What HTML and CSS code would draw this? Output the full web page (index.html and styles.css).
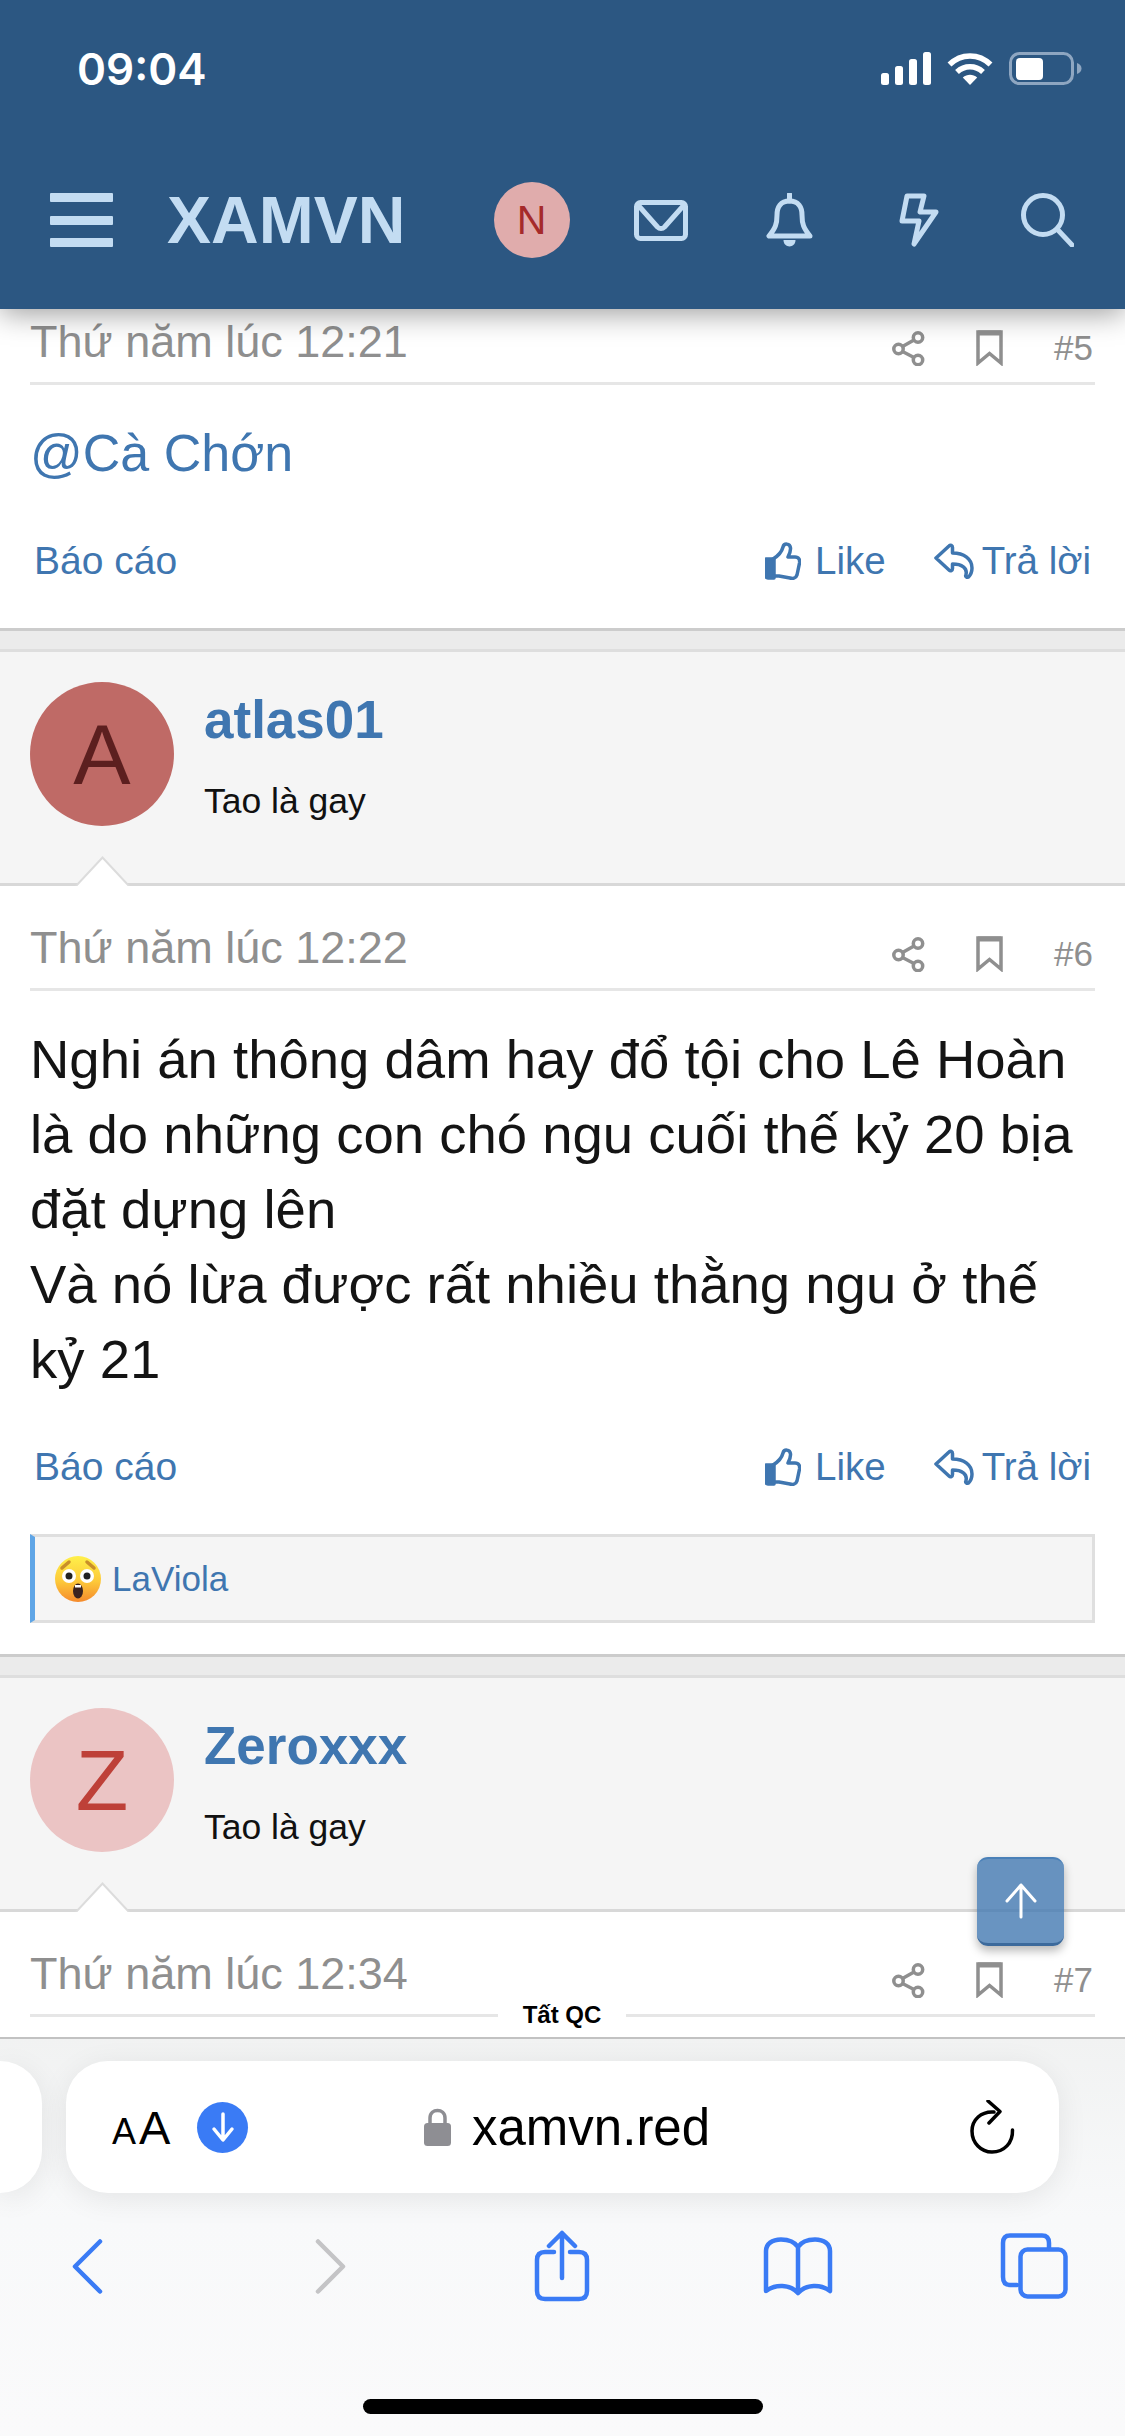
FILE: index.html
```html
<!DOCTYPE html>
<html lang="en">

<head>
    <meta charset="UTF-8" />
    <meta name="viewport" content="width=device-width, initial-scale=1.0" />
    <title>XAMVN</title>
    <link rel="stylesheet" href="styles.css">
</head>

<body>
    <svg class="defs" width="0" height="0">
        <symbol id="i-share" viewBox="0 0 33 35">
            <circle cx="26" cy="6.5" r="4.7" />
            <circle cx="6.5" cy="18" r="4.7" />
            <circle cx="26" cy="29" r="4.7" />
            <path d="M10.5 15.5 22 9M10.5 20.5 22 26.5" />
        </symbol>
        <symbol id="i-mark" viewBox="0 0 27 36">
            <path d="M2 2H25V33L13.5 23.5 2 33Z" />
            <path d="M2 3H25" stroke-width="5" />
        </symbol>
        <symbol id="i-thumb" viewBox="0 0 36 38">
            <path d="M1 17H9V36H3Q1 36 1 34Z" fill="#3f76b0" />
            <path d="M8 17C13 14 17 9 18 5 19 1 25 1 25.500 6 25.800 9 24.500 12 23 15H30C34 15 35 18 34.500 21L32 33C31 36 28 37 25 36L14 34H8" />
        </symbol>
        <symbol id="i-reply" viewBox="0 0 40 36">
            <path d="M2 15 15 3C16.500 1.500 18.500 2.500 18.500 4.500V10C30 10 38 16 38 25 38 29 36.500 32 34.500 34 32.500 35 31 33.500 32 31.500 33.500 25 28 21 18.500 21V25.500C18.500 27.500 16.500 28.500 15 27Z" />
        </symbol>
    </svg>

    <div class="screen">
        <header class="top">
            <div class="status">
                <span class="clock">09:04</span>
                <div class="status-icons">
                    <svg width="50" height="33" viewBox="0 0 50 33" fill="#fff">
                        <rect x="0" y="21" width="8" height="12" rx="2.500" />
                        <rect x="14" y="14" width="8" height="19" rx="2.500" />
                        <rect x="28" y="7" width="8" height="26" rx="2.500" />
                        <rect x="42" y="0" width="8" height="33" rx="2.500" />
                    </svg>
                    <svg width="46" height="33" viewBox="0 0 46 33" fill="none" stroke="#fff" stroke-width="5.500">
                        <path d="M2.500 12.500C14 1 32 1 43.500 12.500" />
                        <path d="M10 20C17.500 13 28.500 13 36 20" />
                        <path d="M23 33 15.800 25.500C20 21.800 26 21.800 30.200 25.500Z" fill="#fff" stroke="none" />
                    </svg>
                    <svg width="73" height="33" viewBox="0 0 73 33">
                        <rect x="1.500" y="1.500" width="62" height="30" rx="9" fill="none" stroke="#8ea6c1" stroke-width="3" />
                        <rect x="7" y="6" width="27" height="22" rx="4" fill="#fff" />
                        <path d="M68 11C71 12 72.500 14 72.500 16.500S71 21 68 22Z" fill="#8ea6c1" />
                    </svg>
                </div>
            </div>
            <nav class="nav">
                <div class="burger"><i></i><i></i><i></i></div>
                <span class="logo">XAMVN</span>
                <div class="nav-items">
                    <div class="nav-slot"><span class="me">N</span></div>
                    <div class="nav-slot">
                        <svg class="nav-icon" width="54" height="41" viewBox="0 0 54 41">
                            <rect x="2.500" y="2.500" width="49" height="36" rx="4" />
                            <path d="M4 5 23.500 27C25.500 29 28.500 29 30.500 27L50 5" />
                        </svg>
                    </div>
                    <div class="nav-slot">
                        <svg class="nav-icon" width="47" height="54" viewBox="0 0 47 54">
                            <path d="M23.500 8C14.500 8 11 14 11 22 11 31 9.500 35 3 43H44C37.500 35 36 31 36 22 36 14 32.500 8 23.500 8Z" />
                            <path d="M23.500 1V8" />
                            <path class="fill" d="M17.500 47H29.500C29.500 55.500 17.500 55.500 17.500 47Z" />
                        </svg>
                    </div>
                    <div class="nav-slot">
                        <svg class="nav-icon" width="40" height="54" viewBox="0 0 40 54">
                            <path d="M8 3H25L21 19H37L15 51 20 28H3Z" />
                        </svg>
                    </div>
                    <div class="nav-slot">
                        <svg class="nav-icon" width="53" height="54" viewBox="0 0 53 54">
                            <circle cx="22" cy="22" r="19.500" />
                            <path d="M36 36 51 52" />
                        </svg>
                    </div>
                </div>
            </nav>
        </header>

        <main class="thread">
            <!-- post 5, scrolled under the header -->
            <article class="post">
                <div class="post-head first">
                    <span class="post-date">Thứ năm lúc 12:21</span>
                    <div class="post-tools">
                        <svg class="tool" width="33" height="35"><use href="#i-share" /></svg>
                        <svg class="tool" width="27" height="36"><use href="#i-mark" /></svg>
                        <span class="post-num">#5</span>
                    </div>
                </div>
                <div class="post-text mention">@Cà Chớn</div>
                <div class="post-foot">
                    <a class="foot-link">Báo cáo</a>
                    <div class="foot-right">
                        <a class="foot-link like"><svg class="foot-icon" width="36" height="38"><use href="#i-thumb" /></svg>Like</a>
                        <a class="foot-link reply"><svg class="foot-icon" width="40" height="36"><use href="#i-reply" /></svg>Trả lời</a>
                    </div>
                </div>
            </article>
            <div class="gap"></div>

            <section class="user">
                <div class="avatar av-a">A</div>
                <div class="user-info">
                    <a class="user-name">atlas01</a>
                    <span class="user-title">Tao là gay</span>
                </div>
                <svg class="pointer" width="55" height="30" viewBox="0 0 55 30">
                    <path d="M1 30 27.500 1.500 54 30" fill="#fff" stroke="#dcdcdc" stroke-width="2" />
                </svg>
            </section>
            <article class="post">
                <div class="post-head">
                    <span class="post-date">Thứ năm lúc 12:22</span>
                    <div class="post-tools">
                        <svg class="tool" width="33" height="35"><use href="#i-share" /></svg>
                        <svg class="tool" width="27" height="36"><use href="#i-mark" /></svg>
                        <span class="post-num">#6</span>
                    </div>
                </div>
                <div class="post-text">Nghi án thông dâm hay đổ tội cho Lê Hoàn là do những con chó ngu cuối thế kỷ 20 bịa đặt dựng lên<br>Và nó lừa được rất nhiều thằng ngu ở thế kỷ 21</div>
                <div class="post-foot">
                    <a class="foot-link">Báo cáo</a>
                    <div class="foot-right">
                        <a class="foot-link like"><svg class="foot-icon" width="36" height="38"><use href="#i-thumb" /></svg>Like</a>
                        <a class="foot-link reply"><svg class="foot-icon" width="40" height="36"><use href="#i-reply" /></svg>Trả lời</a>
                    </div>
                </div>
                <div class="likes">
                    <svg width="46" height="46" viewBox="0 0 46 46">
                        <defs>
                            <linearGradient id="wow" x1="0" y1="0" x2="0" y2="1">
                                <stop offset="0" stop-color="#fff04a" />
                                <stop offset="0.55" stop-color="#fdc93a" />
                                <stop offset="1" stop-color="#f58a2c" />
                            </linearGradient>
                        </defs>
                        <circle cx="23" cy="23" r="23" fill="url(#wow)" />
                        <path d="M7 12 14 6M39 12 32 6" stroke="#c98f2a" stroke-width="3.500" stroke-linecap="round" />
                        <circle cx="14" cy="20" r="7" fill="#fff" />
                        <circle cx="32" cy="20" r="7" fill="#fff" />
                        <circle cx="14" cy="20" r="3.500" fill="#222" />
                        <circle cx="32" cy="20" r="3.500" fill="#222" />
                        <ellipse cx="23" cy="35" rx="5" ry="7.500" fill="#3a2320" />
                        <rect x="20" y="29" width="6" height="2.500" fill="#fff" />
                    </svg>
                    <a class="likes-name">LaViola</a>
                </div>
            </article>
            <div class="gap"></div>

            <section class="user">
                <div class="avatar av-z">Z</div>
                <div class="user-info">
                    <a class="user-name">Zeroxxx</a>
                    <span class="user-title">Tao là gay</span>
                </div>
                <svg class="pointer" width="55" height="30" viewBox="0 0 55 30">
                    <path d="M1 30 27.500 1.500 54 30" fill="#fff" stroke="#dcdcdc" stroke-width="2" />
                </svg>
            </section>
            <article class="post">
                <div class="post-head">
                    <span class="post-date">Thứ năm lúc 12:34</span>
                    <div class="post-tools">
                        <svg class="tool" width="33" height="35"><use href="#i-share" /></svg>
                        <svg class="tool" width="27" height="36"><use href="#i-mark" /></svg>
                        <span class="post-num">#7</span>
                    </div>
                </div>
            </article>
            <span class="ad-off">Tất QC</span>
        </main>

        <a class="to-top">
            <svg width="36" height="36" viewBox="0 0 36 36" fill="none" stroke="#fff" stroke-width="3" stroke-linecap="round" stroke-linejoin="round">
                <path d="M18 34V2M4 18 18 2 32 18" />
            </svg>
        </a>

        <footer class="safari">
            <div class="tabs-row">
                <div class="tab-stub"></div>
                <div class="url-bar">
                    <span class="aa"><small>A</small>A</span>
                    <span class="dl">
                        <svg width="26" height="32" viewBox="0 0 26 32" fill="none" stroke="#fff" stroke-width="3.500" stroke-linecap="round" stroke-linejoin="round">
                            <path d="M13 3V28M4 18 13 29 22 18" />
                        </svg>
                    </span>
                    <div class="url">
                        <svg width="27" height="38" viewBox="0 0 27 38">
                            <path d="M6 17V10C6 0 21 0 21 10V17" fill="none" stroke="#8e8e93" stroke-width="3.500" />
                            <rect x="0" y="15" width="27" height="23" rx="3.500" fill="#8e8e93" />
                        </svg>
                        <span>xamvn.red</span>
                    </div>
                    <svg class="reload" width="46" height="54" viewBox="0 0 46 54" fill="none" stroke="#000" stroke-width="3.500" stroke-linecap="round" stroke-linejoin="round">
                        <path d="M25 12C12 11 3 20 3 31 3 43 12 52 23 52 35 52 44 43 43.500 30" />
                        <path d="M19 1 31 11.500 20 23" />
                    </svg>
                </div>
            </div>
            <div class="tool-row">
                <svg class="blue" width="31" height="55" viewBox="0 0 31 55"><path d="M28 2.500 3 27.500 28 52.500" /></svg>
                <svg class="grey" width="31" height="55" viewBox="0 0 31 55"><path d="M3 2.500 28 27.500 3 52.500" /></svg>
                <svg class="blue" width="56" height="72" viewBox="0 0 56 72">
                    <path d="M20 22H11Q3 22 3 30V61Q3 69 11 69H45Q53 69 53 61V30Q53 22 45 22H36" />
                    <path d="M28 48V3M15 16 28 3 41 16" />
                </svg>
                <svg class="blue" width="70" height="59" viewBox="0 0 70 59">
                    <path d="M35 10C31 4 25 2.500 18 2.500 9 2.500 3 7 3 14V54C12 47 27 47 35 56 43 47 58 47 67 54V14C67 7 61 2.500 52 2.500 45 2.500 39 4 35 10ZM35 10V56" />
                </svg>
                <svg class="blue" width="68" height="66" viewBox="0 0 68 66">
                    <path d="M17 52H10Q3 52 3 44V10Q3 2.500 10 2.500H42Q49 2.500 49 10V16" />
                    <rect x="20.500" y="16.500" width="45" height="47" rx="7" />
                </svg>
            </div>
            <div class="home-bar"></div>
        </footer>
    </div>
</body>

</html>
```

FILE: styles.css
```css
* {
    box-sizing: border-box;
}

body {
    margin: 0;
    font-family: "Liberation Sans", Arial, sans-serif;
    background: #fff;
    color: #141414;
}

a {
    color: #3f76b0;
    text-decoration: none;
}

.defs {
    position: absolute;
}

.screen {
    position: relative;
    width: 1125px;
    height: 2436px;
    display: flex;
    flex-direction: column;
    overflow: hidden;
}

/* header */
.top {
    position: relative;
    z-index: 2;
    flex: none;
    height: 309px;
    background: #2c5782;
    box-shadow: 0 4px 28px rgba(0, 0, 0, 0.4);
}

.status {
    height: 137px;
    padding: 0 43px 0 77px;
    display: flex;
    align-items: center;
    justify-content: space-between;
}

.clock {
    font-family: Inter, sans-serif;
    font-size: 44px;
    font-weight: 600;
    color: #fff;
}

.status-icons {
    display: flex;
    align-items: center;
    gap: 16px;
}

.nav {
    height: 166px;
    padding-left: 50px;
    display: flex;
    align-items: center;
}

.burger {
    width: 63px;
    height: 54px;
    display: flex;
    flex-direction: column;
    justify-content: space-between;
}

.burger i {
    display: block;
    height: 9px;
    border-radius: 1px;
    background: #c3dcf2;
}

.logo {
    margin-left: 54px;
    font-size: 66px;
    font-weight: bold;
    color: #c3dcf2;
}

.nav-items {
    margin-left: auto;
    margin-right: 13px;
    display: flex;
}

.nav-slot {
    width: 129px;
    height: 76px;
    display: flex;
    align-items: center;
    justify-content: center;
}

.me {
    width: 76px;
    height: 76px;
    border-radius: 50%;
    background: #e0acac;
    color: #a52a2a;
    font-size: 41px;
    display: flex;
    align-items: center;
    justify-content: center;
}

.nav-icon {
    fill: none;
    stroke: #c3dcf2;
    stroke-width: 5;
    stroke-linecap: round;
    stroke-linejoin: round;
}

.nav-icon .fill {
    fill: #c3dcf2;
    stroke: none;
}

/* thread */
.thread {
    position: relative;
    flex: 1;
    background: #fff;
    overflow: hidden;
}

.post {
    background: #fff;
    padding: 0 30px;
}

.post-head {
    height: 105px;
    padding-bottom: 14px;
    display: flex;
    align-items: flex-end;
    justify-content: space-between;
    border-bottom: 3px solid #e6e6e6;
}

.post-head.first {
    height: 76px;
}

.post-date {
    font-size: 45px;
    line-height: 52px;
    color: #8f8f8f;
}

.post-tools {
    display: flex;
    align-items: center;
}

.tool {
    fill: none;
    stroke: #8f8f8f;
    stroke-width: 3.5;
}

.tool + .tool {
    margin-left: 51px;
}

.post-num {
    width: 90px;
    margin-right: 2px;
    text-align: right;
    font-size: 35px;
    color: #8f8f8f;
}

.post-text {
    padding-top: 31px;
    font-size: 54.5px;
    line-height: 75px;
}

.mention {
    font-size: 52px;
    color: #3f76b0;
}

.post-foot {
    padding: 48px 4px 45px;
    display: flex;
    align-items: center;
    justify-content: space-between;
}

.foot-right {
    display: flex;
    align-items: center;
}

.foot-link {
    font-size: 39px;
    line-height: 44px;
    display: flex;
    align-items: center;
}

.foot-right .foot-link {
    font-size: 38.5px;
}

.foot-icon {
    fill: none;
    stroke: #3f76b0;
    stroke-width: 3.5;
    stroke-linejoin: round;
    stroke-linecap: round;
}

.like .foot-icon {
    margin-right: 14px;
}

.reply {
    margin-left: 48px;
}

.reply .foot-icon {
    margin-right: 8px;
}

.likes {
    height: 89px;
    margin-bottom: 31px;
    padding-left: 20px;
    display: flex;
    align-items: center;
    gap: 11px;
    background: #f5f5f5;
    border: 3px solid #dfdfdf;
    border-left: 5px solid #5fa5e6;
}

.likes-name {
    font-size: 35px;
}

.gap {
    height: 21px;
    background: #ebebeb;
    border-top: 3px solid #ccc;
}

.user {
    position: relative;
    height: 237px;
    padding: 30px;
    display: flex;
    gap: 30px;
    background: #f5f5f5;
    border-top: 3px solid #dedede;
    border-bottom: 3px solid #d8d8d8;
}

.avatar {
    width: 144px;
    height: 144px;
    border-radius: 50%;
    font-size: 86px;
    display: flex;
    align-items: center;
    justify-content: center;
}

.av-a {
    background: #bf6a66;
    color: #5c1f1f;
}

.av-z {
    background: #ebc4c4;
    color: #be4038;
}

.user-info {
    display: flex;
    flex-direction: column;
}

.user-name {
    margin-top: 8px;
    font-size: 53px;
    line-height: 60px;
    font-weight: bold;
}

.user-title {
    margin-top: 30px;
    font-size: 35.5px;
    line-height: 42px;
    color: #111;
}

.pointer {
    position: absolute;
    left: 75px;
    bottom: -3px;
}

.ad-off {
    position: absolute;
    left: 498px;
    bottom: 7px;
    width: 128px;
    height: 30px;
    background: #fff;
    font-size: 24px;
    line-height: 30px;
    font-weight: bold;
    text-align: center;
    color: #000;
}

.to-top {
    position: absolute;
    z-index: 1;
    left: 977px;
    top: 1857px;
    width: 87px;
    height: 89px;
    border-radius: 11px;
    background: rgba(63, 118, 176, 0.78);
    border-top: 2px solid #4a80b8;
    border-bottom: 3px solid #3c6a9c;
    box-shadow: 0 5px 10px rgba(0, 0, 0, 0.28);
    display: flex;
    align-items: center;
    justify-content: center;
}

/* safari bar */
.safari {
    flex: none;
    height: 399px;
    padding-top: 22px;
    border-top: 2px solid #c2c2c2;
    background: linear-gradient(#f1f2f2, #f8f9fa 45%, #fafafb);
}

.tabs-row {
    display: flex;
    gap: 24px;
    padding-right: 66px;
}

.tab-stub,
.url-bar {
    height: 132px;
    background: #fff;
    box-shadow: 0 6px 30px rgba(0, 0, 0, 0.08);
}

.tab-stub {
    width: 42px;
    border-radius: 0 42px 42px 0;
}

.url-bar {
    flex: 1;
    border-radius: 42px;
    padding: 0 44px 0 46px;
    display: flex;
    align-items: center;
}

.aa {
    width: 58px;
    margin-top: 6px;
    font-size: 47px;
    line-height: 50px;
    white-space: nowrap;
    color: #000;
}

.aa small {
    font-size: 36px;
    margin-right: 3px;
}

.dl {
    width: 51px;
    height: 51px;
    margin-left: 27px;
    border-radius: 50%;
    background: #3a7bf5;
    display: flex;
    align-items: center;
    justify-content: center;
}

.url {
    margin-left: 176px;
    display: flex;
    align-items: center;
    gap: 21px;
    font-size: 51px;
    color: #000;
}

.reload {
    margin-left: auto;
}

.tool-row {
    height: 72px;
    margin-top: 37px;
    display: grid;
    grid-template-columns: 174px 312px 152px 320px 152px;
    justify-items: center;
    align-items: center;
}

.tool-row svg {
    fill: none;
    stroke-width: 4.5;
    stroke-linecap: round;
    stroke-linejoin: round;
}

.blue {
    stroke: #3a7bf5;
}

.grey {
    stroke: #c4c4c6;
}

.home-bar {
    width: 400px;
    height: 15px;
    margin: 97px auto 0;
    border-radius: 8px;
    background: #000;
}
```
